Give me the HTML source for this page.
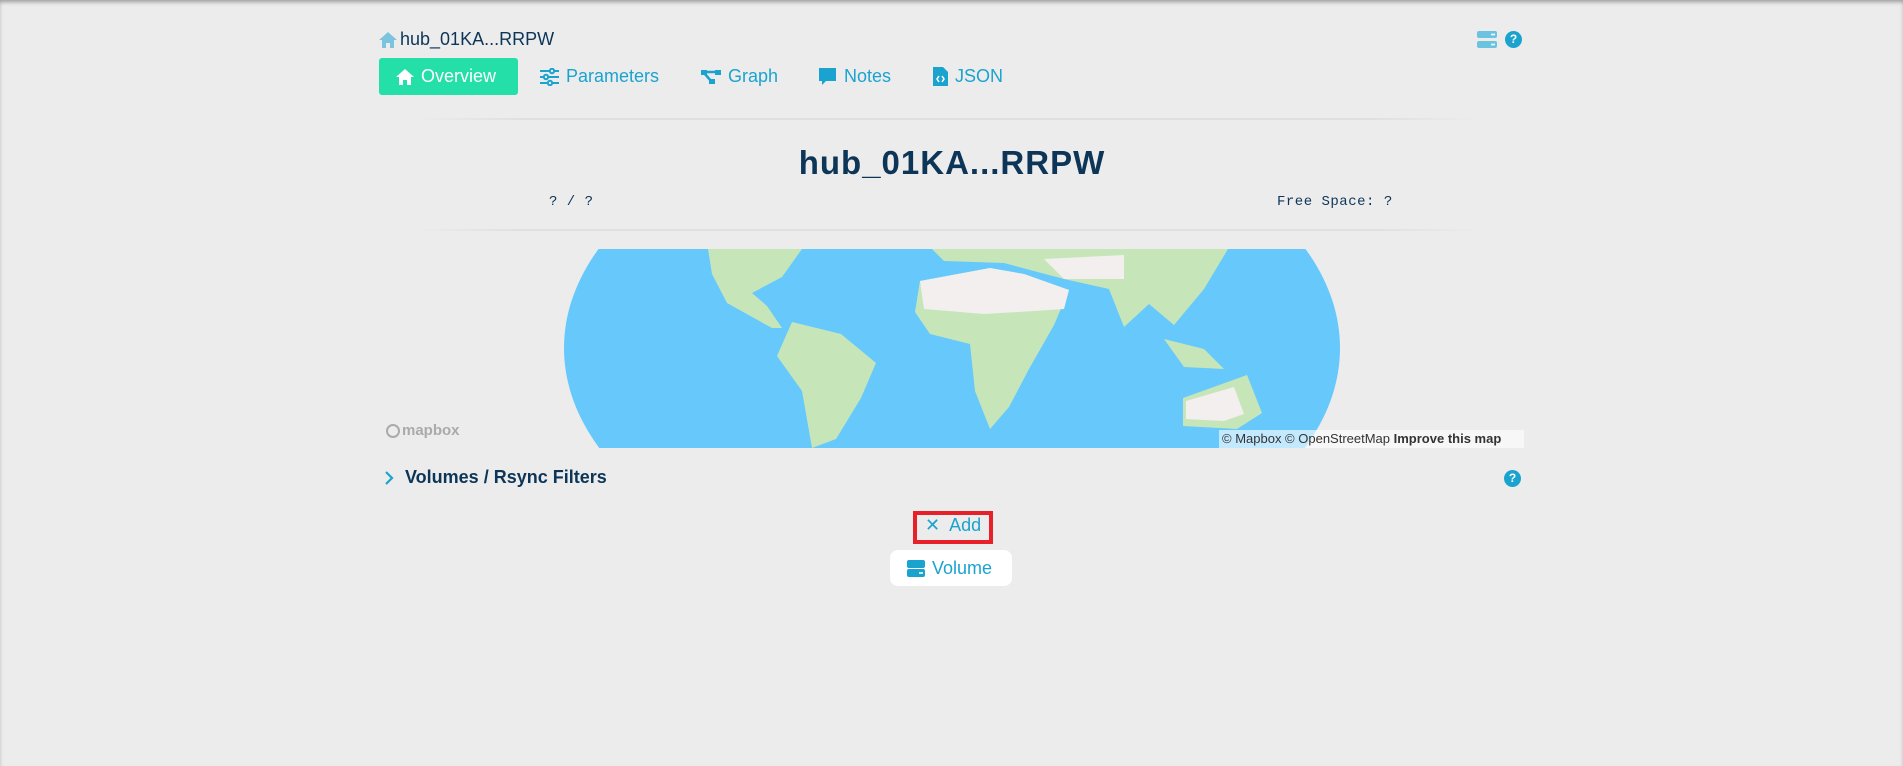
<!DOCTYPE html>
<html><head><meta charset="utf-8"><style>
*{margin:0;padding:0;box-sizing:border-box}
body{width:1903px;height:766px;background:#ececec;font-family:"Liberation Sans",sans-serif;position:relative;overflow:hidden;box-shadow:inset 0 3px 4px -1px rgba(0,0,0,.35)}
.a{position:absolute}
.tab{position:absolute;top:58px;height:37px;line-height:37px;font-size:18px;color:#1ba3cf;display:flex;align-items:center;gap:7px}
.hr{position:absolute;height:2px;background:linear-gradient(90deg,rgba(224,224,224,0),#e0e0e0 10%,#e0e0e0 90%,rgba(224,224,224,0))}
.mono{font-family:"Liberation Mono",monospace;font-size:14px;color:#0d3557;letter-spacing:.5px}
</style></head><body>
<svg class="a" style="left:378px;top:31px" width="20" height="18" viewBox="0 0 20 18"><path d="M10 1 L19 9 H16 V17 H12 V12 H8 V17 H4 V9 H1 Z" fill="#7cc4dd"/></svg>
<div class="a" style="left:400px;top:29px;font-size:18px;color:#0d3557">hub_01KA...RRPW</div>
<svg class="a" style="left:1477px;top:31px" width="20" height="18" viewBox="0 0 20 18"><rect x="0" y="0" width="20" height="7" rx="2" fill="#6cc3df"/><rect x="0" y="10" width="20" height="7" rx="2" fill="#6cc3df"/><circle cx="15" cy="3.5" r="1" fill="#fff"/><circle cx="17" cy="3.5" r="1" fill="#fff"/><circle cx="15" cy="13.5" r="1" fill="#fff"/><circle cx="17" cy="13.5" r="1" fill="#fff"/></svg>
<div class="a" style="left:1505px;top:31px;width:17px;height:17px;border-radius:50%;background:#1ba3cf;color:#fff;font-size:12px;font-weight:bold;text-align:center;line-height:17px">?</div>
<div class="a" style="left:379px;top:58px;width:139px;height:37px;background:#25dfa9;border-radius:3px;color:#fff;font-size:18px;display:flex;align-items:center;padding-left:16px;gap:6px"><svg width="20" height="18" viewBox="0 0 20 18"><path d="M10 1 L19 9 H16 V17 H12 V12 H8 V17 H4 V9 H1 Z" fill="#fff"/></svg>Overview</div>
<div class="tab" style="left:540px"><svg width="19" height="18" viewBox="0 0 19 18" fill="none" stroke="#1ba3cf" stroke-width="2"><path d="M0 3H19M0 9H19M0 15H19"/><circle cx="12" cy="3" r="2.2" fill="#ececec"/><circle cx="6" cy="9" r="2.2" fill="#ececec"/><circle cx="10" cy="15" r="2.2" fill="#ececec"/></svg>Parameters</div>
<div class="tab" style="left:701px"><svg width="20" height="16" viewBox="0 0 20 16" fill="#1ba3cf"><rect x="0" y="1" width="6" height="5"/><rect x="14" y="1" width="6" height="5"/><rect x="8" y="10" width="6" height="5"/><path d="M5 3H15M4 5L10 12" stroke="#1ba3cf" stroke-width="2.5"/></svg>Graph</div>
<div class="tab" style="left:818px"><svg width="19" height="19" viewBox="0 0 19 19" fill="#1ba3cf"><path d="M1 1H18V14H8L4 18V14H1Z"/></svg>Notes</div>
<div class="tab" style="left:933px"><svg width="15" height="19" viewBox="0 0 15 19"><path d="M0 0H10L15 5V19H0Z" fill="#1ba3cf"/><path d="M6 9L4 12L6 15M9 9L11 12L9 15" stroke="#fff" stroke-width="1.5" fill="none"/></svg>JSON</div>
<div class="hr" style="left:413px;top:118px;width:1068px"></div>
<div class="a" style="left:0;width:1903px;top:144px;text-align:center;font-size:33px;font-weight:bold;color:#0d3557;letter-spacing:1px;padding-left:1px">hub_01KA...RRPW</div>
<div class="a mono" style="left:549px;top:194px">? / ?</div>
<div class="a mono" style="left:1277px;top:194px">Free Space: ?</div>
<div class="hr" style="left:413px;top:229px;width:1068px"></div>
<svg class="a" style="left:564px;top:249px" width="776" height="199" viewBox="0 0 776 199">
<defs><clipPath id="c"><ellipse cx="388" cy="99" rx="388" ry="240"/></clipPath></defs>
<g clip-path="url(#c)">
<rect width="776" height="199" fill="#66c8fb"/>
<g fill="#c6e6b9">
<polygon points="144,0 238,0 218,28 188,44 203,57 218,79 208,79 163,54 148,25"/>
<polygon points="228,73 277,85 312,114 297,149 272,190 248,199 238,142 213,107"/>
<polygon points="356,32 426,19 460,25 505,41 490,76 465,120 445,158 426,180 411,142 406,95 366,85 351,63"/>
<polygon points="368,0 664,0 640,40 610,76 585,55 560,78 545,40 500,30 440,14 380,12"/>
<polygon points="600,90 640,100 660,120 620,118"/>
<polygon points="619,149 683,126 698,164 673,180 619,177"/>
</g>
<g fill="#f2efee">
<polygon points="356,32 426,19 460,25 505,41 500,60 470,62 420,65 360,60"/>
<polygon points="480,10 560,6 560,30 500,30"/>
<polygon points="622,152 670,138 680,165 660,172 622,170"/>
</g>
</g></svg>
<div class="a" style="left:386px;top:422px;font-size:15px;font-weight:bold;color:#aaa;display:flex;align-items:center;gap:2px"><span style="display:inline-block;width:14px;height:14px;border:2px solid #aaa;border-radius:50%"></span>mapbox</div>
<div class="a" style="left:1219px;top:430px;width:305px;height:18px;background:rgba(255,255,255,.6);font-size:13px;color:#333;line-height:18px;padding-left:3px">© Mapbox © OpenStreetMap <b style="font-weight:bold">Improve this map</b></div>
<svg class="a" style="left:384px;top:471px" width="10" height="14" viewBox="0 0 10 14"><path d="M2 1L8 7L2 13" stroke="#1ba3cf" stroke-width="2.2" fill="none"/></svg>
<div class="a" style="left:405px;top:467px;font-size:18px;font-weight:bold;color:#0d3557">Volumes / Rsync Filters</div>
<div class="a" style="left:1504px;top:470px;width:17px;height:17px;border-radius:50%;background:#1ba3cf;color:#fff;font-size:12px;font-weight:bold;text-align:center;line-height:17px">?</div>
<div class="a" style="left:913px;top:511px;width:80px;height:33px;border:4px solid #e8202a"></div>
<div class="a" style="left:925px;top:515px;font-size:18px;color:#1ba3cf">✕&nbsp; Add</div>
<div class="a" style="left:890px;top:550px;width:122px;height:36px;background:#fff;border-radius:8px;font-size:18px;color:#1ba3cf;display:flex;align-items:center;padding-left:17px;gap:7px"><svg width="18" height="17" viewBox="0 0 18 17"><rect width="18" height="8" rx="2" fill="#1ba3cf"/><rect y="9" width="18" height="8" rx="2" fill="#1ba3cf"/><circle cx="13" cy="13" r="1" fill="#fff"/><circle cx="15" cy="13" r="1" fill="#fff"/></svg>Volume</div>
</body></html>
